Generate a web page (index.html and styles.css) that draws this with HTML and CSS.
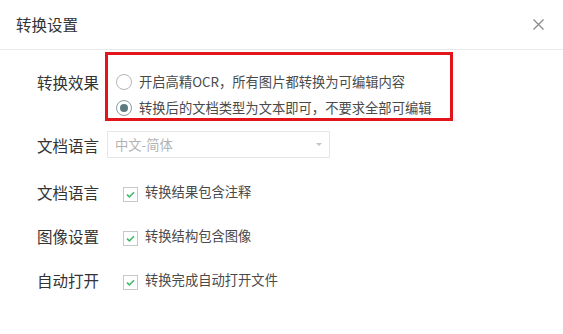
FILE: index.html
```html
<!DOCTYPE html>
<html lang="zh-CN">
<head>
<meta charset="utf-8">
<title>转换设置</title>
<link rel="stylesheet" href="styles.css">
</head>
<body>
<div class="dialog">
  <div class="header">
    <div class="title">转换设置</div>
    <svg class="close" width="11" height="11" viewBox="0 0 11 11"><path d="M0.5 0.5 L10.5 10.5 M10.5 0.5 L0.5 10.5" stroke="#8a8a8a" stroke-width="1.3" fill="none"/></svg>
  </div>
  <div class="form">
    <div class="row row-radio">
      <div class="label label-top">转换效果</div>
      <div class="highlight">
        <div class="radio-line"><span class="radio"></span><span class="opt">开启高精OCR，所有图片都转换为可编辑内容</span></div>
        <div class="radio-line"><span class="radio checked"></span><span class="opt">转换后的文档类型为文本即可，不要求全部可编辑</span></div>
      </div>
    </div>
    <div class="row row-select">
      <div class="label">文档语言</div>
      <div class="select"><span>中文-简体</span><span class="caret"></span></div>
    </div>
    <div class="row row-check">
      <div class="label">文档语言</div>
      <span class="check"><svg width="9" height="7" viewBox="0 0 9 7"><path d="M1 3.6 L3.4 5.8 L8 1.2" stroke="#3dbb6b" stroke-width="1.6" fill="none"/></svg></span>
      <span class="opt">转换结果包含注释</span>
    </div>
    <div class="row row-check">
      <div class="label">图像设置</div>
      <span class="check"><svg width="9" height="7" viewBox="0 0 9 7"><path d="M1 3.6 L3.4 5.8 L8 1.2" stroke="#3dbb6b" stroke-width="1.6" fill="none"/></svg></span>
      <span class="opt">转换结构包含图像</span>
    </div>
    <div class="row row-check">
      <div class="label">自动打开</div>
      <span class="check"><svg width="9" height="7" viewBox="0 0 9 7"><path d="M1 3.6 L3.4 5.8 L8 1.2" stroke="#3dbb6b" stroke-width="1.6" fill="none"/></svg></span>
      <span class="opt">转换完成自动打开文件</span>
    </div>
  </div>
</div>
</body>
</html>
```
FILE: styles.css
```css
html, body {
  margin: 0;
  padding: 0;
  background: #ffffff;
}
body {
  width: 563px;
  height: 334px;
  overflow: hidden;
  font-family: "Noto Sans CJK SC", "Noto Sans", sans-serif;
  color: #333333;
}
.header {
  height: 49px;
  border-bottom: 1px solid #e9e9e9;
  display: flex;
  align-items: center;
  justify-content: space-between;
  padding: 0 19px 0 16px;
}
.title {
  font-size: 15.5px;
  color: #333;
  line-height: 20px;
  margin-top: -1px;
}
.close {
  display: block;
  margin-top: 0px;
}
.form {
  padding-top: 2px;
  display: flex;
  flex-direction: column;
}
.row {
  display: flex;
  align-items: center;
}
.row-radio {
  align-items: flex-start;
}
.row-select {
  margin-top: 10px;
}
.row-check {
  height: 20px;
  margin-top: 24px;
}
.row-select + .row-check {
  margin-top: 24px;
}
.label {
  width: 63px;
  padding-left: 37px;
  font-size: 15.5px;
  line-height: 20px;
  color: #333;
  white-space: nowrap;
  flex: none;
}
.label-top {
  margin-top: 20px;
}
.highlight {
  margin-left: 5px;
  width: 342px;
  height: 63px;
  border: 3px solid #e4141b;
  padding: 17px 0 0 8px;
  box-sizing: content-box;
  display: flex;
  flex-direction: column;
  gap: 6px;
  width: 334px;
  height: 46px;
}
.radio-line {
  display: flex;
  align-items: center;
  height: 20px;
}
.radio {
  width: 14px;
  height: 14px;
  border: 1px solid #b5b5b5;
  border-radius: 50%;
  box-sizing: content-box;
  flex: none;
  display: flex;
  align-items: center;
  justify-content: center;
  margin-right: 7px;
}
.radio.checked {
  border-color: #8a9a9e;
}
.radio.checked::after {
  content: "";
  width: 8px;
  height: 8px;
  border-radius: 50%;
  background: #5d7a80;
}
.opt {
  font-size: 13.3px;
  color: #4a4a4a;
  line-height: 20px;
  white-space: nowrap;
}
.select {
  margin-left: 7px;
  width: 219px;
  height: 25px;
  border: 1px solid #e6e6e6;
  display: flex;
  align-items: center;
  justify-content: space-between;
  padding: 0 7px 0 7px;
  box-sizing: content-box;
  width: 207px;
  font-size: 13.3px;
  color: #b3b3b3;
}
.caret {
  width: 0;
  height: 0;
  border-left: 3px solid transparent;
  border-right: 3px solid transparent;
  border-top: 3px solid #c4c4c4;
}
.check {
  margin-left: 23px;
  margin-top: 4px;
  width: 13px;
  height: 13px;
  border: 1px solid #c8c8c8;
  box-sizing: content-box;
  display: flex;
  align-items: center;
  justify-content: center;
  flex: none;
  margin-right: 7px;
}
.check svg {
  display: block;
}
```
